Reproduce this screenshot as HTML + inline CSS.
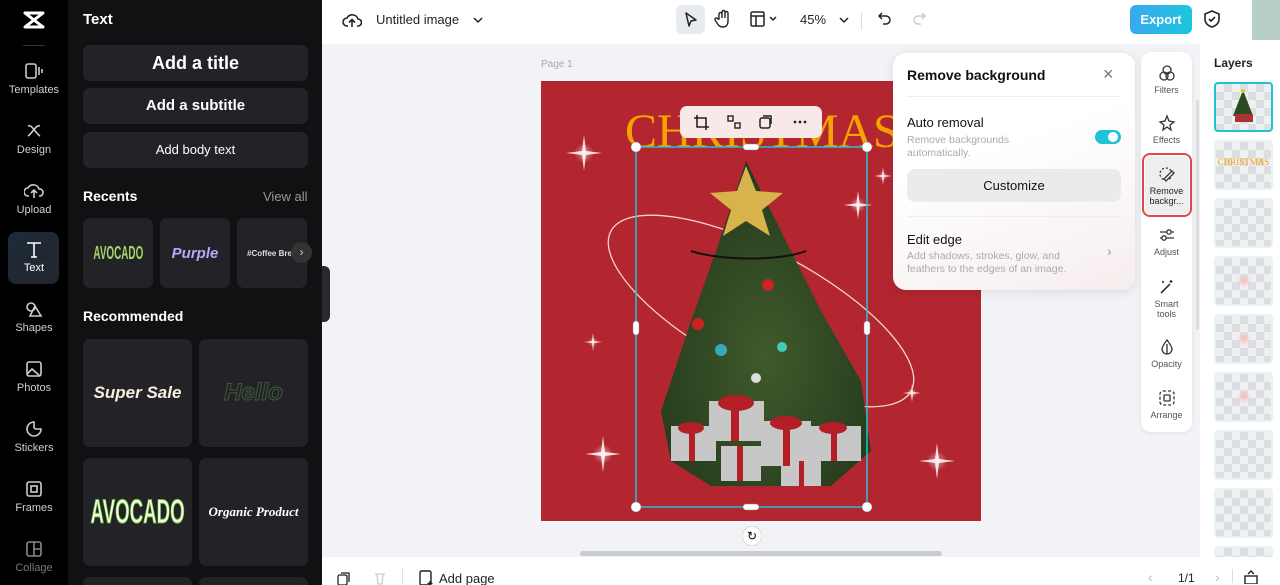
<!DOCTYPE html>
<html><head><meta charset="utf-8"><style>
*{box-sizing:border-box;margin:0;padding:0}
html,body{width:1280px;height:585px;overflow:hidden}
body{position:relative;font-family:"Liberation Sans",sans-serif;background:#f1f3f6}
.a{position:absolute}
.rail{left:0;top:0;width:68px;height:585px;background:#000}
.ri{position:absolute;left:0;width:68px;text-align:center;color:#cfcfd2;font-size:11px}
.ri svg{display:block;margin:0 auto 4px}
.panel{left:68px;top:0;width:254px;height:585px;background:#111113;overflow:hidden}
.btn{position:absolute;left:15px;width:225px;background:#232327;border-radius:7px;color:#fff;font-weight:bold;text-align:center}
.card{position:absolute;background:#232327;border-radius:7px;display:flex;align-items:center;justify-content:center;overflow:hidden}
.top{left:322px;top:0;width:958px;height:44px;background:#fff}
.bot{left:322px;top:557px;width:958px;height:28px;background:#fff}
.tr{left:1141px;top:52px;width:51px;height:380px;background:#fff;border-radius:10px;box-shadow:0 1px 4px rgba(0,0,0,.08)}
.ti{position:absolute;left:0;width:51px;text-align:center;font-size:9px;color:#555;line-height:10px}
.ti svg{display:block;margin:0 auto 3px}
.lay{left:1200px;top:44px;width:80px;height:513px;background:#fff;overflow:hidden}
.th{position:absolute;left:14px;width:59px;height:50px;border-radius:4px;background-color:#eef0f2;background-image:linear-gradient(45deg,#dcdfe2 25%,transparent 25%,transparent 75%,#dcdfe2 75%),linear-gradient(45deg,#dcdfe2 25%,transparent 25%,transparent 75%,#dcdfe2 75%);background-size:16px 16px;background-position:0 0,8px 8px;border:2px solid #e6f4f6}
.nar{display:inline-block;transform:scaleX(.55);font-weight:bold}
</style></head><body>
<div class="a rail">
 <svg class="a" style="left:22px;top:10px" width="24" height="20" viewBox="0 0 24 20"><path d="M3 3h18L3 17h18M3 3l18 14" fill="none" stroke="#fff" stroke-width="3" stroke-linecap="round" stroke-linejoin="round"/></svg>
 <div class="a" style="left:23px;top:45px;width:22px;height:1px;background:#333"></div>
 <div class="ri" style="top:62px"><svg width="20" height="18"><rect x="2" y="2" width="10" height="14" rx="2" fill="none" stroke="#ccc" stroke-width="1.6"/><path d="M15 5v8M18 7v4" stroke="#ccc" stroke-width="1.6"/></svg>Templates</div>
 <div class="ri" style="top:122px"><svg width="20" height="18"><path d="M4 4c4-2 8 8 12 10M16 4C12 2 8 12 4 14" fill="none" stroke="#ccc" stroke-width="1.6"/></svg>Design</div>
 <div class="ri" style="top:182px"><svg width="20" height="18"><path d="M5 14H4a4 4 0 010-8 6 6 0 0111 1 3.5 3.5 0 011 7h-1M10 16V9M7 11l3-3 3 3" fill="none" stroke="#ccc" stroke-width="1.6"/></svg>Upload</div>
 <div class="a" style="left:8px;top:232px;width:51px;height:52px;background:linear-gradient(135deg,#1d2a38,#23272d);border-radius:8px"></div>
 <div class="ri" style="top:240px;color:#fff"><svg width="20" height="18"><path d="M3 3h14M10 3v14M7 17h6" stroke="#fff" stroke-width="1.6"/></svg>Text</div>
 <div class="ri" style="top:300px"><svg width="20" height="18"><circle cx="7" cy="7" r="4" fill="none" stroke="#ccc" stroke-width="1.6"/><path d="M11 6l6 10H6z" fill="none" stroke="#ccc" stroke-width="1.6"/></svg>Shapes</div>
 <div class="ri" style="top:360px"><svg width="20" height="18"><rect x="3" y="2" width="14" height="14" rx="2" fill="none" stroke="#ccc" stroke-width="1.6"/><path d="M3 14l5-5 8 7" fill="none" stroke="#ccc" stroke-width="1.6"/></svg>Photos</div>
 <div class="ri" style="top:420px"><svg width="20" height="18"><path d="M10 2a7 7 0 107 7h-5a2 2 0 01-2-2z" fill="none" stroke="#ccc" stroke-width="1.6"/></svg>Stickers</div>
 <div class="ri" style="top:480px"><svg width="20" height="18"><rect x="3" y="2" width="14" height="14" rx="2" fill="none" stroke="#ccc" stroke-width="1.6"/><rect x="7" y="6" width="6" height="6" fill="none" stroke="#ccc" stroke-width="1.6"/></svg>Frames</div>
 <div class="ri" style="top:540px;color:#777"><svg width="20" height="18"><rect x="3" y="2" width="14" height="14" rx="2" fill="none" stroke="#888" stroke-width="1.6"/><path d="M10 2v14M10 9h7" stroke="#888" stroke-width="1.6"/></svg>Collage</div>
</div>
<div class="a panel">
 <div class="a" style="left:15px;top:11px;color:#fff;font-weight:bold;font-size:15px">Text</div>
 <div class="btn" style="top:45px;height:36px;line-height:36px;font-size:18px">Add a title</div>
 <div class="btn" style="top:88px;height:36px;line-height:36px;font-size:15px">Add a subtitle</div>
 <div class="btn" style="top:132px;height:36px;line-height:36px;font-size:13px;font-weight:normal">Add body text</div>
 <div class="a" style="left:15px;top:188px;color:#fff;font-weight:bold;font-size:14px">Recents</div>
 <div class="a" style="left:195px;top:189px;color:#999;font-size:13px">View all</div>
 <div class="card" style="left:15px;top:218px;width:70px;height:70px;color:#a6d46a;font-size:18px"><span class="nar">AVOCADO</span></div>
 <div class="card" style="left:92px;top:218px;width:70px;height:70px;color:#b9a8ff;font-weight:bold;font-style:italic;font-size:15px">Purple</div>
 <div class="card" style="left:169px;top:218px;width:70px;height:70px;color:#ddd;font-size:8px;font-weight:bold;justify-content:flex-start;padding-left:10px;white-space:nowrap">#Coffee Brea</div>
 <div class="a" style="left:223px;top:242px;width:21px;height:21px;border-radius:50%;background:#333;color:#ccc;font-size:12px;text-align:center;line-height:20px">›</div>
 <div class="a" style="left:15px;top:308px;color:#fff;font-weight:bold;font-size:14px">Recommended</div>
 <div class="card" style="left:15px;top:339px;width:109px;height:108px;color:#fbeee0;font-weight:bold;font-style:italic;font-size:17px">Super Sale</div>
 <div class="card" style="left:131px;top:339px;width:109px;height:108px;color:#232327;font-weight:bold;font-style:italic;font-size:24px;-webkit-text-stroke:1px #3f5a3a">Hello</div>
 <div class="card" style="left:15px;top:458px;width:109px;height:108px;color:#e8ffd8;font-size:34px;-webkit-text-stroke:1px #6aa83a"><span class="nar">AVOCADO</span></div>
 <div class="card" style="left:131px;top:458px;width:109px;height:108px;color:#fff;font-style:italic;font-weight:bold;font-family:'Liberation Serif',serif;font-size:13px">Organic Product</div>
 <div class="card" style="left:15px;top:577px;width:109px;height:20px"></div>
 <div class="card" style="left:131px;top:577px;width:109px;height:20px"></div>
</div>
<div class="a" style="left:322px;top:266px;width:8px;height:56px;background:#2a2a2d;border-radius:0 6px 6px 0"></div>
<div class="a top">
 <svg class="a" style="left:20px;top:10px" width="20" height="20"><path d="M6 16H5a4 4 0 010-8 6 6 0 0111 1 3.5 3.5 0 010 7h-1M10 17V10M7 12.5l3-3 3 3" fill="none" stroke="#222" stroke-width="1.6"/></svg>
 <div class="a" style="left:54px;top:12px;font-size:13px;color:#222">Untitled image</div>
 <svg class="a" style="left:150px;top:14px" width="12" height="12"><path d="M2 4l4 4 4-4" fill="none" stroke="#222" stroke-width="1.5"/></svg>
 <div class="a" style="left:354px;top:5px;width:29px;height:29px;background:#e7eaee;border-radius:6px"></div>
 <svg class="a" style="left:361px;top:11px" width="16" height="18"><path d="M3 2l10 7-5 1-2 5z" fill="none" stroke="#222" stroke-width="1.5" stroke-linejoin="round"/></svg>
 <svg class="a" style="left:392px;top:9px" width="18" height="20"><path d="M5 10V5a1.5 1.5 0 013 0v4V3a1.5 1.5 0 013 0v6V4a1.5 1.5 0 013 0v8c0 4-2 6-5 6s-4-1-6-4l-2-3a1.5 1.5 0 013-1z" fill="none" stroke="#222" stroke-width="1.4"/></svg>
 <svg class="a" style="left:428px;top:11px" width="30" height="16"><rect x="1" y="1" width="13" height="14" rx="1.5" fill="none" stroke="#222" stroke-width="1.5"/><path d="M1 5h13M6 5v10M20 6l3 3 3-3" fill="none" stroke="#222" stroke-width="1.5"/></svg>
 <div class="a" style="left:478px;top:12px;font-size:13px;color:#222">45%</div>
 <svg class="a" style="left:516px;top:14px" width="12" height="12"><path d="M2 4l4 4 4-4" fill="none" stroke="#222" stroke-width="1.5"/></svg>
 <div class="a" style="left:539px;top:12px;width:1px;height:18px;background:#ddd"></div>
 <svg class="a" style="left:555px;top:11px" width="16" height="16"><path d="M5 2L2 5l3 3M2 5h7a4 4 0 010 8H6" fill="none" stroke="#222" stroke-width="1.5"/></svg>
 <svg class="a" style="left:589px;top:11px" width="16" height="16"><path d="M11 2l3 3-3 3M14 5H7a4 4 0 000 8h3" fill="none" stroke="#ccc" stroke-width="1.5"/></svg>
 <div class="a" style="left:808px;top:5px;width:62px;height:29px;border-radius:6px;background:linear-gradient(90deg,#3aa8f0,#1cc6dc);color:#fff;font-weight:bold;font-size:13px;text-align:center;line-height:29px">Export</div>
 <svg class="a" style="left:881px;top:10px" width="18" height="18"><path d="M9 1l7 3v5c0 4-3 7-7 8-4-1-7-4-7-8V4z" fill="none" stroke="#222" stroke-width="1.6"/><path d="M6 9l2 2 4-4" fill="none" stroke="#222" stroke-width="1.6"/></svg>
 <div class="a" style="left:930px;top:0;width:28px;height:40px;background:#b7cfc8"></div>
</div>
<div class="a" style="left:541px;top:59px;font-size:10px;color:#aaa">Page 1</div>
<svg class="a" style="left:541px;top:81px" width="440" height="440" viewBox="0 0 440 440">
 <defs><radialGradient id="sp"><stop offset="0" stop-color="#fff" stop-opacity=".5"/><stop offset="1" stop-color="#fff" stop-opacity="0"/></radialGradient>
 <radialGradient id="tg" cx=".5" cy=".6" r=".6"><stop offset="0" stop-color="#3f5a2c"/><stop offset="1" stop-color="#253a1c"/></radialGradient>
 <g id="st"><circle r="10" fill="url(#sp)"/><path d="M0-18L2-2 18 0 2 2 0 18-2 2-18 0-2-2z" fill="#fff" opacity=".85"/></g></defs>
 <rect width="440" height="440" fill="#b3262f"/>
 <text x="84" y="66" font-family="Liberation Serif" font-size="48" fill="#f5a300">CHRISTMAS</text>
 <use href="#st" transform="translate(43 72)"/><use href="#st" transform="translate(396 380)"/><use href="#st" transform="translate(62 373)"/><use href="#st" transform="translate(317 124) scale(.8)"/><use href="#st" transform="translate(52 261) scale(.5)"/><use href="#st" transform="translate(371 312) scale(.5)"/><use href="#st" transform="translate(342 95) scale(.5)"/>
 <ellipse cx="220" cy="230" rx="170" ry="60" transform="rotate(28 220 230)" fill="none" stroke="#f3d6d6" stroke-width="1.3"/>
 <path d="M205 80L175 170 150 240 120 330 130 380 170 405 290 405 330 370 320 300 280 230 250 170z" fill="url(#tg)"/>
 <path d="M150 170c30 10 90 10 115 0" fill="none" stroke="#111" stroke-width="2"/>
 <path d="M205 85l10 25 27 2-21 17 8 26-24-15-23 15 8-26-21-17 27-2z" fill="#d8b34b"/>
 <g fill="#c7c7c7"><rect x="130" y="345" width="45" height="35"/><rect x="168" y="320" width="55" height="40"/><rect x="220" y="340" width="50" height="45"/><rect x="265" y="345" width="55" height="35"/><rect x="180" y="365" width="40" height="35"/><rect x="240" y="380" width="40" height="25"/></g>
 <g fill="#b41e26"><rect x="148" y="345" width="6" height="35"/><rect x="190" y="320" width="8" height="40"/><rect x="242" y="340" width="7" height="45"/><rect x="290" y="345" width="6" height="35"/><rect x="196" y="365" width="6" height="35"/><rect x="258" y="380" width="5" height="25"/><ellipse cx="195" cy="322" rx="18" ry="8"/><ellipse cx="245" cy="342" rx="16" ry="7"/><ellipse cx="150" cy="347" rx="13" ry="6"/><ellipse cx="292" cy="347" rx="14" ry="6"/></g>
 <g><circle cx="157" cy="243" r="6" fill="#c22"/><circle cx="180" cy="269" r="6" fill="#3ab"/><circle cx="215" cy="297" r="5" fill="#ddd"/><circle cx="241" cy="266" r="5" fill="#4cb"/><circle cx="227" cy="204" r="6" fill="#c22"/></g>
 <rect x="95" y="66" width="231" height="360" fill="none" stroke="#1fc4d6" stroke-width="1.5"/>
 <g fill="#fff" stroke="#888" stroke-width=".5"><circle cx="95" cy="66" r="5"/><circle cx="326" cy="66" r="5"/><circle cx="95" cy="426" r="5"/><circle cx="326" cy="426" r="5"/><rect x="202" y="63" width="16" height="6" rx="3"/><rect x="202" y="423" width="16" height="6" rx="3"/><rect x="92" y="240" width="6" height="14" rx="3"/><rect x="323" y="240" width="6" height="14" rx="3"/></g>
</svg>
<div class="a" style="left:680px;top:106px;width:142px;height:32px;background:#f8e9e8;border-radius:7px"></div>
<svg class="a" style="left:692px;top:113px" width="120" height="20"><path d="M5 2v12h12M2 5h12v12" fill="none" stroke="#222" stroke-width="1.6"/><rect x="36" y="3" width="5" height="5" fill="none" stroke="#222" stroke-width="1.4"/><rect x="43" y="10" width="5" height="5" fill="none" stroke="#222" stroke-width="1.4"/><rect x="68" y="5" width="10" height="10" rx="2" fill="none" stroke="#222" stroke-width="1.5"/><path d="M71 3h8v8" fill="none" stroke="#222" stroke-width="1.5"/><circle cx="103" cy="9" r="1.4" fill="#222"/><circle cx="108" cy="9" r="1.4" fill="#222"/><circle cx="113" cy="9" r="1.4" fill="#222"/></svg>
<div class="a" style="left:742px;top:526px;width:20px;height:20px;border-radius:50%;background:#fff;border:1px solid #ddd;text-align:center;line-height:18px;font-size:12px">↻</div>
<div class="a" style="left:580px;top:551px;width:362px;height:5px;border-radius:3px;background:#c8cbcf"></div>
<div class="a" style="left:893px;top:53px;width:242px;height:237px;background:linear-gradient(160deg,#fff 40%,#f6eded);border-radius:13px;box-shadow:0 2px 10px rgba(0,0,0,.1)">
 <div class="a" style="left:14px;top:14px;font-weight:bold;font-size:14px;color:#111">Remove background</div>
 <div class="a" style="left:210px;top:11px;font-size:18px;color:#777">×</div>
 <div class="a" style="left:14px;top:43px;width:214px;height:1px;background:#eee"></div>
 <div class="a" style="left:14px;top:62px;font-size:13px;color:#111">Auto removal</div>
 <div class="a" style="left:14px;top:81px;font-size:10.5px;color:#aaa;line-height:13px">Remove backgrounds<br>automatically.</div>
 <div class="a" style="left:202px;top:77px;width:26px;height:14px;border-radius:7px;background:#1cc4d6"><div class="a" style="left:13px;top:2px;width:10px;height:10px;border-radius:50%;background:#fff"></div></div>
 <div class="a" style="left:14px;top:116px;width:214px;height:33px;border-radius:8px;background:#ebebed;text-align:center;line-height:33px;font-size:13px;color:#111">Customize</div>
 <div class="a" style="left:14px;top:163px;width:214px;height:1px;background:#eee"></div>
 <div class="a" style="left:14px;top:179px;font-size:13px;color:#111">Edit edge</div>
 <div class="a" style="left:14px;top:197px;font-size:10.5px;color:#aaa;line-height:13px">Add shadows, strokes, glow, and<br>feathers to the edges of an image.</div>
 <div class="a" style="left:214px;top:190px;font-size:14px;color:#999">›</div>
</div>
<div class="a tr">
 <div class="ti" style="top:12px"><svg width="18" height="18"><circle cx="9" cy="6" r="4" fill="none" stroke="#333" stroke-width="1.3"/><circle cx="6" cy="12" r="4" fill="none" stroke="#333" stroke-width="1.3"/><circle cx="12" cy="12" r="4" fill="none" stroke="#333" stroke-width="1.3"/></svg>Filters</div>
 <div class="ti" style="top:62px"><svg width="18" height="18"><path d="M9 2l2 5 5 1-4 3 1 5-4-3-4 3 1-5-4-3 5-1z" fill="none" stroke="#333" stroke-width="1.3"/></svg>Effects</div>
 <div class="a" style="left:4px;top:104px;width:44px;height:58px;background:#eceef0;border-radius:5px;outline:2px solid #e0474c;outline-offset:1px"></div>
 <div class="ti" style="top:113px;color:#222"><svg width="18" height="18"><circle cx="8" cy="9" r="6" fill="none" stroke="#333" stroke-width="1.3" stroke-dasharray="2 2"/><path d="M6 14l8-8 2 2-8 8z" fill="#fff" stroke="#333" stroke-width="1.3"/></svg>Remove<br>backgr...</div>
 <div class="ti" style="top:174px"><svg width="18" height="18"><path d="M2 6h14M2 12h14" stroke="#333" stroke-width="1.3"/><circle cx="11" cy="6" r="2.2" fill="#fff" stroke="#333" stroke-width="1.3"/><circle cx="6" cy="12" r="2.2" fill="#fff" stroke="#333" stroke-width="1.3"/></svg>Adjust</div>
 <div class="ti" style="top:226px"><svg width="18" height="18"><path d="M3 15l9-9" stroke="#333" stroke-width="1.6"/><path d="M13 2v3M11.5 3.5h3M5 3v2M4 4h2" stroke="#333" stroke-width="1.2"/></svg>Smart<br>tools</div>
 <div class="ti" style="top:286px"><svg width="18" height="18"><path d="M9 2c3 4 5 7 5 9a5 5 0 01-10 0c0-2 2-5 5-9z" fill="none" stroke="#333" stroke-width="1.3"/><path d="M9 6v10" stroke="#333" stroke-width="1.3"/></svg>Opacity</div>
 <div class="ti" style="top:337px"><svg width="18" height="18"><rect x="2" y="2" width="14" height="14" rx="3" fill="none" stroke="#333" stroke-width="1.3" stroke-dasharray="3 2"/><rect x="6" y="6" width="6" height="6" rx="1" fill="none" stroke="#333" stroke-width="1.3"/></svg>Arrange</div>
</div>
<div class="a" style="left:1196px;top:100px;width:3px;height:230px;background:#ddd;border-radius:2px"></div>
<div class="a lay">
 <div class="a" style="left:14px;top:12px;font-weight:bold;font-size:12px;color:#222">Layers</div>
 <div class="th" style="top:38px;border-color:#1cc4d6"><svg width="55" height="46"><path d="M27 6l-10 26h20z" fill="#2c4a22"/><rect x="19" y="30" width="18" height="8" fill="#a33"/><circle cx="27" cy="7" r="2" fill="#eb3"/></svg></div>
 <div class="th" style="top:96px"><div style="color:#f5a300;font-family:'Liberation Serif';font-size:9px;text-align:center;margin-top:15px">CHRISTMAS</div></div>
 <div class="th" style="top:154px"></div>
 <div class="th" style="top:212px"><div style="margin:16px auto;width:14px;height:14px;border-radius:50%;background:radial-gradient(#fbb,transparent 70%)"></div></div>
 <div class="th" style="top:270px"><div style="margin:16px auto;width:14px;height:14px;border-radius:50%;background:radial-gradient(#fbb,transparent 70%)"></div></div>
 <div class="th" style="top:328px"><div style="margin:16px auto;width:14px;height:14px;border-radius:50%;background:radial-gradient(#fbb,transparent 70%)"></div></div>
 <div class="th" style="top:386px"></div>
 <div class="th" style="top:444px"></div>
 <div class="th" style="top:502px"></div>
</div>
<div class="a bot">
 <svg class="a" style="left:15px;top:14px" width="14" height="14"><rect x="1" y="4" width="9" height="10" rx="1.5" fill="none" stroke="#222" stroke-width="1.3"/><path d="M4 2h8v9" fill="none" stroke="#222" stroke-width="1.3"/></svg>
 <svg class="a" style="left:52px;top:14px" width="12" height="14"><path d="M1 3h10M3 3l1 10h4l1-10" fill="none" stroke="#ccc" stroke-width="1.3"/></svg>
 <div class="a" style="left:80px;top:12px;width:1px;height:14px;background:#ddd"></div>
 <svg class="a" style="left:96px;top:13px" width="16" height="16"><rect x="2" y="1" width="11" height="14" rx="1.5" fill="none" stroke="#222" stroke-width="1.4"/><path d="M12 11v5M9.5 13.5h5" stroke="#222" stroke-width="1.4"/></svg>
 <div class="a" style="left:117px;top:14px;font-size:13px;color:#222">Add page</div>
 <div class="a" style="left:826px;top:12px;font-size:14px;color:#bbb">‹</div>
 <div class="a" style="left:856px;top:14px;font-size:12px;color:#222">1/1</div>
 <div class="a" style="left:893px;top:12px;font-size:14px;color:#bbb">›</div>
 <div class="a" style="left:910px;top:12px;width:1px;height:14px;background:#ddd"></div>
 <svg class="a" style="left:922px;top:13px" width="14" height="14"><rect x="1" y="6" width="12" height="8" fill="none" stroke="#222" stroke-width="1.4"/><path d="M4 4l3-3 3 3" fill="none" stroke="#222" stroke-width="1.4"/></svg>
</div>
</body></html>
